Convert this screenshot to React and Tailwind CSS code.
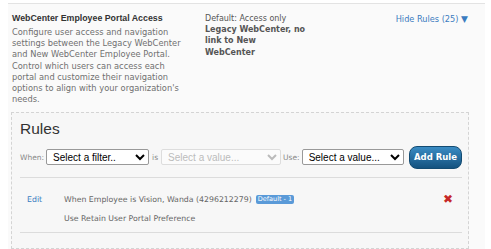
export default function App() {
    return (
        <div className="w-[491px] h-[249px] bg-white pt-[3px] pl-2 pr-[6px] overflow-hidden font-['DejaVu_Sans',Verdana,sans-serif]">
            <div className="h-full border-t border-[#e3e3e3] bg-[#fafafa]">
                {/* header: title, default, toggle */}
                <div className="flex pt-[8px] pl-1 pr-[17px]">
                    <div className="w-[193px] text-[8.3px] leading-[11.2px] text-[#707070] whitespace-nowrap">
                        <div className="font-['Liberation_Sans',Arial,sans-serif] font-bold text-[#333] text-[8.8px] leading-[12px] mb-[3px]">
                            WebCenter Employee Portal Access
                        </div>
                        <p>
                            Configure user access and navigation<br />
                            settings between the Legacy WebCenter<br />
                            and New WebCenter Employee Portal.<br />
                            Control which users can access each<br />
                            portal and customize their navigation<br />
                            options to align with your organization's<br />
                            needs.
                        </p>
                    </div>
                    <div className="text-[8px] leading-[11.2px] text-[#555] pt-[1px] whitespace-nowrap">
                        Default: Access only<br />
                        <span className="font-bold">
                            Legacy WebCenter, no<br />
                            link to New<br />
                            WebCenter
                        </span>
                    </div>
                    <div className="flex-1 flex justify-end">
                        <a className="text-[8.2px] leading-[12px] text-[#3b7cc0] h-fit pt-[1px]">
                            Hide Rules (25) <span className="text-[9px]">▼</span>
                        </a>
                    </div>
                </div>

                {/* rules box */}
                <div className="mt-[7px] ml-[3px] mr-[16px] h-[137px] border border-dashed border-[#d4d4d4] bg-[#f7f7f7] pl-2 pr-[6px]">
                    <h2 className="font-['Liberation_Sans',Arial,sans-serif] text-[15.5px] leading-[18px] text-[#333] mt-[7px]">Rules</h2>
                    <div className="flex items-center mt-[7px] h-[24px]">
                        <span className="text-[7.5px] text-[#888] mr-[2px]">When:</span>
                        <select className="w-[103px] h-[16px] border border-[#999] rounded-[2px] bg-white font-['Liberation_Sans',Arial,sans-serif] text-[10px] leading-[14px] text-black px-[2px]">
                            <option>Select a filter..</option>
                        </select>
                        <span className="text-[7.5px] text-[#888] mx-[3px]">is</span>
                        <select disabled className="w-[120px] h-[16px] border border-[#ddd] rounded-[2px] bg-[#fbfbfb] font-['Liberation_Sans',Arial,sans-serif] text-[10px] leading-[14px] text-[#bbb] px-[2px]">
                            <option>Select a value...</option>
                        </select>
                        <span className="text-[7.5px] text-[#888] mx-[2px]">Use:</span>
                        <select className="w-[102px] h-[16px] border border-[#999] rounded-[2px] bg-white font-['Liberation_Sans',Arial,sans-serif] text-[10px] leading-[14px] text-black px-[2px]">
                            <option>Select a value...</option>
                        </select>
                        <button className="ml-auto w-[53px] h-[23px] rounded-[8px] border border-[#134b72] bg-gradient-to-b from-[#3a8cc4] to-[#14527f] text-white text-[8.5px] font-bold">
                            Add Rule
                        </button>
                    </div>
                    <div className="mt-[8px] border-t border-[#dcdcdc] border-b pt-[12px] pb-[3px] flex text-[7.8px] text-[#666]">
                        <a className="w-[44px] pl-[7px] text-[#3b7cc0] leading-[19px]">Edit</a>
                        <div className="flex-1">
                            <div className="flex items-center h-[19px]">
                                When Employee is Vision, Wanda (4296212279)
                                <span className="ml-[4px] px-[2px] text-[6.5px] leading-[9px] bg-[#5a9ad8] text-white rounded-[2px]">
                                    Default - 1
                                </span>
                            </div>
                            <div className="h-[20px] leading-[20px]">Use Retain User Portal Preference</div>
                        </div>
                        <span className="text-[#c62828] text-[12px] font-bold leading-[19px] mr-[9px]">✖</span>
                    </div>
                </div>
            </div>
        </div>
    );
}
